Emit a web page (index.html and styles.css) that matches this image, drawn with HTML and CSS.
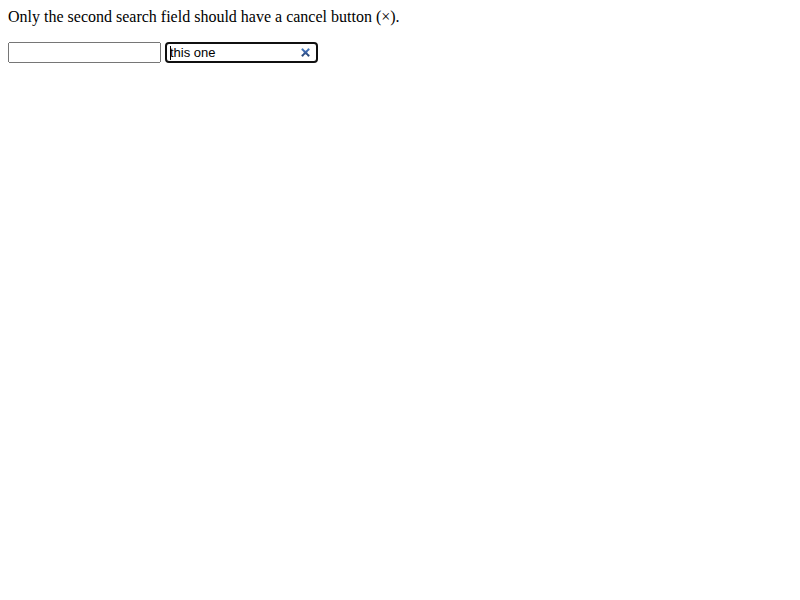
FILE: index.html
```html
<!DOCTYPE html>
<html>
<head>
<meta charset="utf-8">
<link rel="stylesheet" href="styles.css">
</head>
<body>
<p class="note">Only the second search field should have a cancel button (&times;).</p>
<p class="fields"><input type="search" class="search no-cancel"> <input type="search" class="search with-cancel" value="this one" autofocus></p>
</body>
</html>
```
FILE: styles.css
```css
body {
  margin: 8px;
  font-family: "Liberation Serif", serif;
  font-size: 16px;
}
.note {
  margin: 0;
  line-height: 18px;
}
.fields {
  margin: 16px 0 0;
}
.search {
  box-sizing: border-box;
  width: 153px;
  height: 21px;
  font-family: "Liberation Sans", Arial, sans-serif;
  font-size: 13px;
  padding: 1px 3px;
}
.with-cancel {
  background: #fff linear-gradient(#000, #000) no-repeat 3px 2px / 1px 14px;
}
.no-cancel::-webkit-search-cancel-button {
  -webkit-appearance: none;
  display: none;
}
```
